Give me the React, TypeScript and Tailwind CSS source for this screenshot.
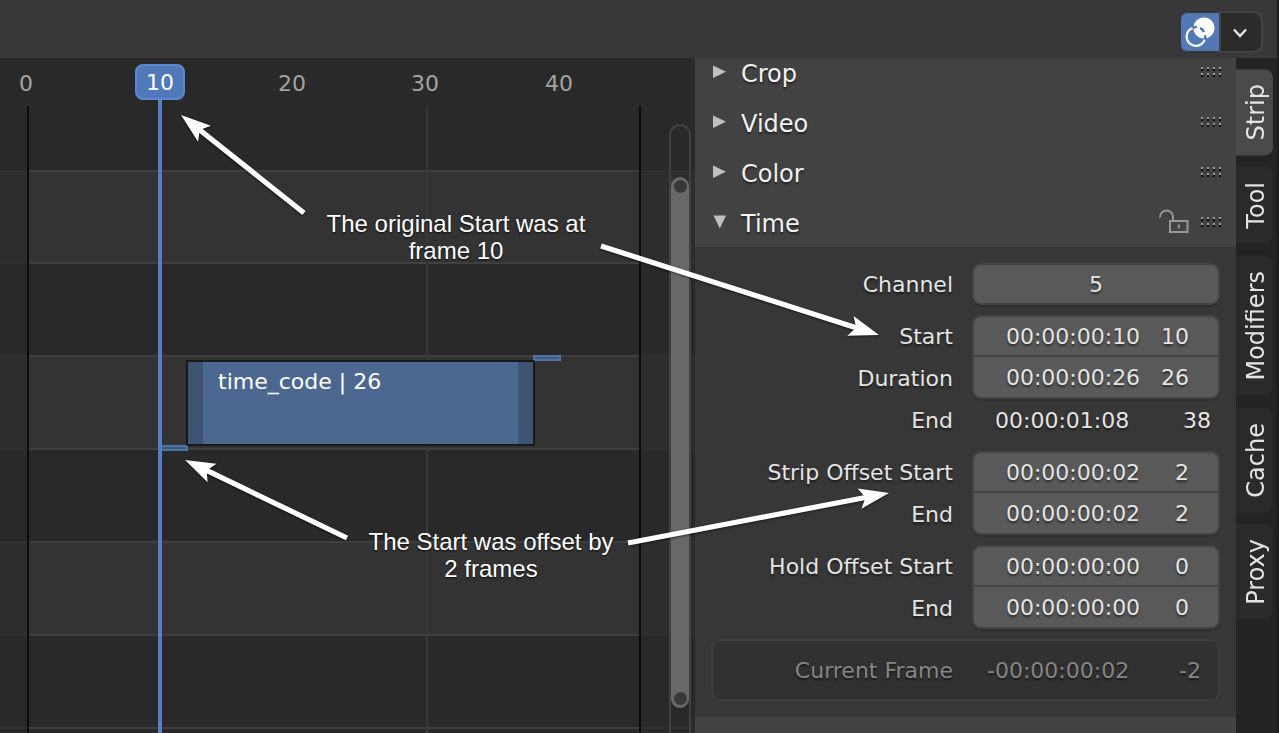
import React from "react";

const RULER = [
  { frame: "0", x: "left-[26px]" },
  { frame: "20", x: "left-[292px]" },
  { frame: "30", x: "left-[425px]" },
  { frame: "40", x: "left-[559px]" },
];

const ROW_LINES = [112, 204, 297, 390, 483, 576, 669];
const LIGHT_ROWS = [112, 297, 483];

function Arrow({ x1, y1, x2, y2 }: { x1: number; y1: number; x2: number; y2: number }) {
  const angle = (Math.atan2(y2 - y1, x2 - x1) * 180) / Math.PI;
  const length = Math.hypot(x2 - x1, y2 - y1);
  return (
    <g transform={`translate(${x2} ${y2}) rotate(${angle})`} fill="#ffffff">
      <rect x={-length} y={-2.6} width={length - 20} height={5.2} />
      <path d="M0 0 L-30 -10.300 L-24 0 L-30 10.300 Z" />
    </g>
  );
}

function Grip() {
  return (
    <svg width="22" height="10" viewBox="0 0 22 10" shapeRendering="crispEdges" aria-hidden="true">
      {[0, 6, 12, 18].map((x) =>
        [0, 6].map((y) => (
          <g key={`${x}-${y}`}>
            <rect x={x} y={y} width="2" height="2" fill="#9a9a9a" />
            <rect x={x} y={y + 2} width="2" height="2" fill="#0c0c0c" />
          </g>
        )),
      )}
    </svg>
  );
}

function PanelHeader({ title, open = false }: { title: string; open?: boolean }) {
  return (
    <div className="flex h-[50px] items-center bg-[#424242] pr-[13px] pl-[17px]">
      <button type="button" aria-expanded={open} className="flex flex-1 items-center gap-[15px] text-left text-2xl text-[#f2f2f2] [text-shadow:0_2px_2px_rgba(0,0,0,0.5)]">
        <svg width="14" height="14" viewBox="0 0 14 14" aria-hidden="true">
          <path d={open ? "M1.5 0.5H14L7.8 13.5Z" : "M1 0.5V13L14 6.8Z"} fill="#c0c0c0" />
        </svg>
        <span className="pt-1">{title}</span>
      </button>
      {open && (
        <button type="button" aria-label="Lock time" className="mr-[11px]">
          <svg width="32" height="26" viewBox="0 0 32 26" fill="none" stroke="#989898" strokeWidth="2" className="block" aria-hidden="true">
            <path d="M2 8.500V8A6.500 6.500 0 0 1 15 8V12" />
            <rect x="12" y="12" width="17.500" height="11" />
            <path d="M20.800 15.500V19.500" />
          </svg>
        </button>
      )}
      <Grip />
    </div>
  );
}

const LABEL = "flex-1 pr-[19px] text-right";

function Field({ id, label, value, frame, shape }: { id: string; label: string; value: string; frame?: string; shape: string }) {
  const text = frame ? value + frame.padStart(frame.length === 1 ? 6 : 5, "\u00a0") : value;
  return (
    <div className="flex h-[42px] items-center">
      <label htmlFor={id} className={LABEL}>{label}</label>
      <input
        id={id}
        defaultValue={text}
        className={
          "h-[42px] w-[248px] border-2 border-[#444444] bg-[#595959] text-center shadow-[0_2px_1px_rgba(0,0,0,0.15)] outline-none [text-shadow:inherit] " +
          (frame ? "pl-[3px] " : "") +
          shape
        }
      />
    </div>
  );
}

const TOP = "rounded-t-[9px]";
const BOTTOM = "rounded-b-[9px] border-t-0";

const TABS = ["Strip", "Tool", "Modifiers", "Cache", "Proxy"];

function Timeline() {
  return (
    <section aria-label="Timeline" className="relative min-w-0 flex-1 overflow-hidden bg-[#292929]">
      <svg className="absolute inset-0 h-full w-full" shapeRendering="crispEdges" aria-hidden="true">
        {LIGHT_ROWS.map((y) => (
          <g key={y}>
            <rect x="0" y={y} width="100%" height="93" fill="#2d2d2d" />
            <rect x="28" y={y} width="612" height="93" fill="#333333" />
          </g>
        ))}
        {ROW_LINES.map((y) => (
          <g key={y}>
            <rect x="0" y={y} width="100%" height="2" fill="#303030" />
            <rect x="28" y={y} width="612" height="2" fill="#3f3f3f" />
          </g>
        ))}
        <rect x="426" y="48" width="2" height="100%" fill="#383838" />
        <rect x="27" y="48" width="2" height="100%" fill="#0c0c0c" />
        <rect x="639" y="48" width="2" height="100%" fill="#0c0c0c" />
      </svg>

      {RULER.map((tick) => (
        <span key={tick.frame} className={"absolute top-[10px] -translate-x-1/2 text-[22px] leading-8 text-[#a3a3a3] " + tick.x}>
          {tick.frame}
        </span>
      ))}

      <div className="absolute top-[387px] left-[160px] h-[6px] w-[28px] border-2 border-[#5273a6] bg-[#3f5a80]" />
      <div className="absolute top-[297px] left-[533px] h-[6px] w-[28px] border-2 border-[#5273a6] bg-[#3f5a80]" />
      <div className="absolute top-[302px] left-[186px] h-[86px] w-[349px] rounded-[2px] border-2 border-[#181818] bg-[#3f5373] px-[15px]">
        <div className="h-full bg-[#4d6890] px-[15px] pt-1 text-[22px] leading-8 text-white">time_code | 26</div>
      </div>

      <div className="absolute top-[30px] bottom-0 left-[158px] w-1 bg-[#557fc1]" />
      <div className="absolute top-[6px] left-[135px] flex h-9 w-[50px] items-center justify-center rounded-lg border-2 border-[#5a87cf] bg-[#5179ba] text-[22px] text-white">
        10
      </div>

      <div className="absolute top-[66px] -bottom-4 left-[669px] w-[22px] rounded-full border-2 border-[#404040]" />
      <div className="absolute top-[119px] left-[671px] flex h-[531px] w-[18px] flex-col items-center justify-between rounded-full bg-[#686868] py-[3px]">
        <span className="size-[13px] rounded-full bg-[#383838]" />
        <span className="size-[13px] rounded-full bg-[#383838]" />
      </div>
    </section>
  );
}

export default function App() {
  return (
    <div className="relative flex h-screen flex-col overflow-hidden border-r-2 border-[#1c1c1c] bg-[#383838] font-['DejaVu_Sans',sans-serif] text-[22px] text-[#e4e4e4]">
      <header className="flex h-[58px] shrink-0 items-center justify-end pt-[6px] pr-[14px]">
        <button type="button" aria-label="Show overlays" className="flex size-[38px] items-center justify-center rounded-l-md bg-[#5179b6]">
          <svg width="38" height="38" viewBox="0 0 38 38" aria-hidden="true">
            <circle cx="23" cy="15" r="10.600" fill="#ffffff" />
            <g fill="none" strokeWidth="2.200">
              <path d="M11.500 14.900A9.300 9.300 0 1 0 23.700 26.700" stroke="#ffffff" />
              <path d="M11.900 14.800A9.300 9.300 0 0 1 15.800 14.200M19.100 15.100A9.300 9.300 0 0 1 23.100 18.900M24.200 22.200A9.300 9.300 0 0 1 24.100 26" stroke="#466ca8" />
            </g>
          </svg>
        </button>
        <button type="button" aria-label="Overlay options" className="flex h-[42px] w-[44px] items-center justify-center rounded-r-[10px] border-2 border-[#434343] bg-[#2b2b2b] pr-[2px]">
          <svg width="14" height="10" viewBox="0 0 14 10" className="mt-[2px]" fill="none" stroke="#e6e6e6" strokeWidth="2.400" aria-hidden="true">
            <path d="M1 1.500L7 8L13 1.500" />
          </svg>
        </button>
      </header>

      <main className="flex min-h-0 flex-1">
        <Timeline />

        <section aria-label="Strip properties" className="w-[541px] shrink-0 overflow-hidden bg-[#424242]">
          <div className="-mt-[11px]">
            <PanelHeader title="Crop" />
            <PanelHeader title="Video" />
            <PanelHeader title="Color" />
            <PanelHeader title="Time" open />
          </div>
          <div className="flex flex-col gap-[10px] bg-[#373737] p-4 [text-shadow:0_2px_2px_rgba(0,0,0,0.5)]">
            <Field id="channel" label="Channel" value="5" shape="rounded-[9px]" />
            <div>
              <Field id="start" label="Start" value="00:00:00:10" frame="10" shape={TOP} />
              <Field id="duration" label="Duration" value="00:00:00:26" frame="26" shape={BOTTOM} />
              <div className="flex h-[42px] items-center">
                <span className={LABEL}>End</span>
                <span className="flex w-[248px] justify-between pr-[9px] pl-[23px]">
                  <span>00:00:01:08</span>
                  <span>38</span>
                </span>
              </div>
            </div>
            <div>
              <Field id="offset-start" label="Strip Offset Start" value="00:00:00:02" frame="2" shape={TOP} />
              <Field id="offset-end" label="End" value="00:00:00:02" frame="2" shape={BOTTOM} />
            </div>
            <div>
              <Field id="hold-start" label="Hold Offset Start" value="00:00:00:00" frame="0" shape={TOP} />
              <Field id="hold-end" label="End" value="00:00:00:00" frame="0" shape={BOTTOM} />
            </div>
            <div className="flex h-[62px] items-center rounded-[9px] border-2 border-[#3d3d3d] bg-[#313131] text-[#858585]">
              <span className="flex-1 pr-[17px] text-right">Current Frame</span>
              <span className="flex w-[248px] justify-between pr-[17px] pl-[17px]">
                <span>-00:00:00:02</span>
                <span>-2</span>
              </span>
            </div>
          </div>
        </section>

        <nav role="tablist" aria-label="Sidebar tabs" className="flex w-[41px] shrink-0 flex-col items-start gap-3 bg-[#232323] pt-[11px]">
          {TABS.map((tab, i) => (
            <button
              key={tab}
              type="button"
              role="tab"
              aria-selected={i === 0}
              className={"w-[37px] rotate-180 rounded-l-lg pt-[15px] pr-1 pb-[15px] text-2xl leading-[33px] [writing-mode:vertical-rl] " + (i === 0 ? "bg-[#4a4a4a]" : "bg-[#2a2a2a]")}
            >
              {tab}
            </button>
          ))}
        </nav>
      </main>

      <div className="pointer-events-none absolute inset-0 font-['Liberation_Sans',Arial,sans-serif] text-2xl leading-[27px] text-white [text-shadow:0_1px_2px_rgba(0,0,0,0.8)]">
        <svg className="absolute inset-0 h-full w-full drop-shadow-[0_1px_1px_rgba(0,0,0,0.6)]" aria-hidden="true">
          <Arrow x1={304} y1={213} x2={181} y2={115} />
          <Arrow x1={601} y1={246} x2={879} y2={335} />
          <Arrow x1={347} y1={538} x2={185} y2={460} />
          <Arrow x1={628} y1={543} x2={889} y2={493} />
        </svg>
        <p className="absolute top-[210px] left-[306px] w-[300px] text-center">The original Start was at frame 10</p>
        <p className="absolute top-[528px] left-[361px] w-[260px] text-center">The Start was offset by 2 frames</p>
      </div>
    </div>
  );
}
